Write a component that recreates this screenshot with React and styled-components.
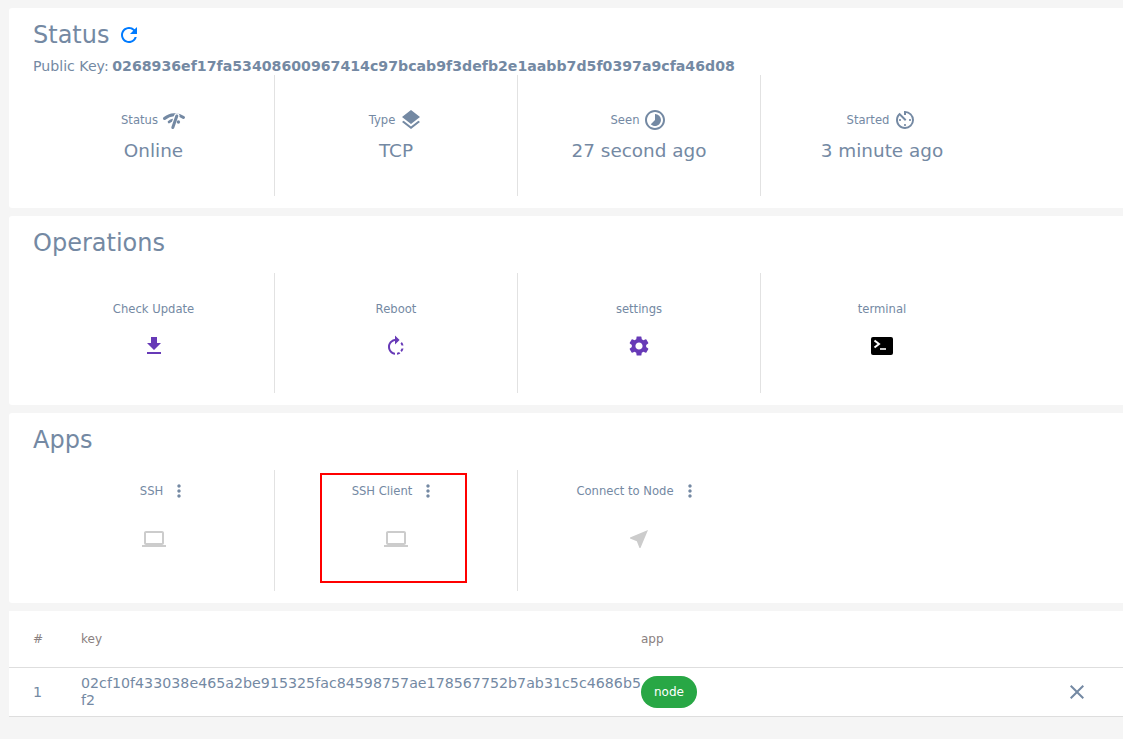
import React from 'react'
import styled, { createGlobalStyle } from 'styled-components'
import { MdRefresh, MdLayers, MdTimelapse, MdFileDownload, MdSettings, MdLaptop, MdNearMe, MdMoreVert, MdClose, MdAvTimer } from 'react-icons/md'

const slate = '#7489a3'

const Global = createGlobalStyle`
    body {
        margin: 0;
        background: #f5f5f5;
        font-family: "DejaVu Sans", sans-serif;
        color: ${slate};
    }
`

const Page = styled.div`
    display: flex;
    flex-direction: column;
    gap: 8px;
    padding: 8px 0 23px 9px;
`

const Card = styled.section`
    background: #fff;
    border-radius: 3px 0 0 3px;
    padding: 12px 0 12px 24px;
`

const TitleRow = styled.div`
    display: flex;
    align-items: center;
    gap: 8px;
    height: 30px;
`

const Title = styled.h2`
    margin: 0;
    font-size: 24px;
    font-weight: 400;
    line-height: 30px;
`

const Refresh = styled(MdRefresh)`
    font-size: 24px;
    color: #007bff;
`

const KeyLine = styled.div`
    font-size: 14.15px;
    line-height: 18px;
    margin-top: 7px;
    b {
        font-weight: 700;
        margin-left: -1px;
    }
`

const Grid = styled.div`
    display: grid;
    grid-template-columns: 242px repeat(3, 243px);
    margin-top: ${p => p.$top}px;
`

const Cell = styled.div`
    position: relative;
    height: ${p => p.$height || 121}px;
    padding-top: ${p => p.$pad}px;
    box-sizing: border-box;
    text-align: center;
    border-right: 1px solid ${p => p.$last ? 'transparent' : '#e2e2e2'};
`

const Label = styled.div`
    display: flex;
    align-items: center;
    justify-content: center;
    gap: ${p => p.$gap || 6}px;
    height: 22px;
    padding-left: ${p => p.$lead || 0}px;
    font-size: 11.6px;
`

const Value = styled.div`
    font-size: 18.4px;
    line-height: 22px;
    margin-top: 9px;
`

const StatIcon = styled.span`
    display: inline-flex;
    font-size: 24px;
    color: ${slate};
`

const ActionIcon = styled.div`
    display: flex;
    justify-content: center;
    margin-top: ${p => p.$top}px;
    font-size: 24px;
    color: #673ab7;
`

const AppIcon = styled(ActionIcon)`
    color: #cccccc;
`

const Dots = styled(MdMoreVert)`
    font-size: 20px;
    color: ${slate};
    margin-right: 2px;
`

const Highlight = styled.div`
    position: absolute;
    left: 45px;
    top: 3px;
    width: 147px;
    height: 110px;
    box-sizing: border-box;
    border: 2px solid #ff0000;
`

const TableCard = styled.section`
    background: #fff;
`

const Table = styled.table`
    width: 100%;
    border-collapse: collapse;
    table-layout: fixed;
    font-size: 14.2px;
    th {
        height: 56px;
        padding: 0;
        font-weight: 400;
        font-size: 12px;
        text-align: left;
        color: #8a7f80;
        border-bottom: 1px solid #dedede;
    }
    td {
        height: 48px;
        padding: 0;
        line-height: 17px;
        border-bottom: 1px solid #dedede;
    }
`

const KeyCell = styled.td`
    word-break: break-all;
    letter-spacing: 0.025px;
`

const Pill = styled.span`
    display: inline-block;
    width: 56px;
    height: 32px;
    line-height: 32px;
    border-radius: 16px;
    background: #28a745;
    color: #fff;
    font-size: 12px;
    text-align: center;
    vertical-align: middle;
`

const CloseIcon = styled(MdClose)`
    display: block;
    font-size: 24px;
    color: ${slate};
    margin-left: auto;
    margin-right: 34px;
`

const WifiIcon = () => (
    <svg width="24" height="24" viewBox="0 0 24 24" fill="none" stroke="currentColor" strokeLinecap="round">
        <path d="M2.5 10.5C8 5.8 16 5.6 21.5 9.5" strokeWidth="3" />
        <path d="M7 14C8.2 13 9.6 12.3 11 12" strokeWidth="2.6" />
        <path d="M14.8 8L10.8 20" stroke="#fff" strokeWidth="5.5" />
        <path d="M14.8 8L10.8 19.5" strokeWidth="3" />
        <circle cx="16.4" cy="14" r="1.7" fill="currentColor" stroke="none" />
    </svg>
)

const RebootIcon = () => (
    <svg width="24" height="24" viewBox="0 0 24 24" fill="currentColor">
        <path d="M11 5.1 V1.6 L15.6 6 L11 10.5 V7.1 C8.2 7.6 6 10 6 12.9 C6 15.8 8.2 18.2 11 18.7 V20.7 C7.1 20.2 4 16.9 4 12.9 C4 8.9 7.1 5.6 11 5.1 Z" />
        <path d="M13 18.7 C13.7 18.6 14.4 18.3 15 18 L16.4 19.4 C15.4 20.1 14.2 20.5 13 20.7 Z" />
        <path d="M16.4 16.6 C16.9 16 17.3 15.3 17.5 14.5 L19.5 14.5 C19.3 15.8 18.7 17 17.8 18 Z" />
        <path d="M17.5 11.5 C17.3 10.7 17 10 16.5 9.4 L17.9 8 C18.8 9 19.3 10.2 19.5 11.5 Z" />
    </svg>
)

const TerminalIcon = () => (
    <svg width="24" height="24" viewBox="0 0 24 24">
        <rect x="1" y="3" width="22" height="18" rx="2" fill="#000" />
        <path d="M4.5 6.5L9 10L4.5 13.5" fill="none" stroke="#fff" strokeWidth="2" />
        <path d="M10 15H16" fill="none" stroke="#fff" strokeWidth="1.6" />
    </svg>
)

const stats = [
    { label: 'Status', value: 'Online', icon: <WifiIcon /> },
    { label: 'Type', value: 'TCP', icon: <MdLayers /> },
    { label: 'Seen', value: '27 second ago', icon: <MdTimelapse /> },
    { label: 'Started', value: '3 minute ago', icon: <MdAvTimer /> },
]

const actions = [
    { label: 'Check Update', icon: <MdFileDownload /> },
    { label: 'Reboot', icon: <RebootIcon /> },
    { label: 'settings', icon: <MdSettings /> },
    { label: 'terminal', icon: <TerminalIcon /> },
]

const apps = [
    { label: 'SSH', icon: <MdLaptop />, lead: 24 },
    { label: 'SSH Client', icon: <MdLaptop />, marked: true },
    { label: 'Connect to Node', icon: <MdNearMe /> },
]

export default function App() {
    return (
        <Page>
            <Global />
            <Card>
                <TitleRow>
                    <Title>Status</Title>
                    <Refresh />
                </TitleRow>
                <KeyLine>
                    Public Key: <b>0268936ef17fa53408600967414c97bcab9f3defb2e1aabb7d5f0397a9cfa46d08</b>
                </KeyLine>
                <Grid $top={0}>
                    {stats.map((s, i) => (
                        <Cell key={s.label} $pad={34} $last={i === 3}>
                            <Label $gap={4}>
                                {s.label}
                                <StatIcon>{s.icon}</StatIcon>
                            </Label>
                            <Value>{s.value}</Value>
                        </Cell>
                    ))}
                </Grid>
            </Card>
            <Card>
                <TitleRow>
                    <Title>Operations</Title>
                </TitleRow>
                <Grid $top={15}>
                    {actions.map((a, i) => (
                        <Cell key={a.label} $pad={25} $height={120} $last={i === 3}>
                            <Label>{a.label}</Label>
                            <ActionIcon $top={14}>{a.icon}</ActionIcon>
                        </Cell>
                    ))}
                </Grid>
            </Card>
            <Card>
                <TitleRow>
                    <Title>Apps</Title>
                </TitleRow>
                <Grid $top={15}>
                    {apps.map((a, i) => (
                        <Cell key={a.label} $pad={10} $last={i === 2}>
                            <Label $lead={a.lead}>
                                {a.label}
                                <Dots />
                            </Label>
                            <AppIcon $top={25}>{a.icon}</AppIcon>
                            {a.marked && <Highlight />}
                        </Cell>
                    ))}
                </Grid>
            </Card>
            <TableCard>
                <Table>
                    <colgroup>
                        <col style={{ width: 72 }} />
                        <col style={{ width: 560 }} />
                        <col />
                        <col style={{ width: 120 }} />
                    </colgroup>
                    <thead>
                        <tr>
                            <th style={{ paddingLeft: 24 }}>#</th>
                            <th>key</th>
                            <th>app</th>
                            <th></th>
                        </tr>
                    </thead>
                    <tbody>
                        <tr>
                            <td style={{ paddingLeft: 24 }}>1</td>
                            <KeyCell>02cf10f433038e465a2be915325fac84598757ae178567752b7ab31c5c4686b5f2</KeyCell>
                            <td><Pill>node</Pill></td>
                            <td><CloseIcon /></td>
                        </tr>
                    </tbody>
                </Table>
            </TableCard>
        </Page>
    )
}
